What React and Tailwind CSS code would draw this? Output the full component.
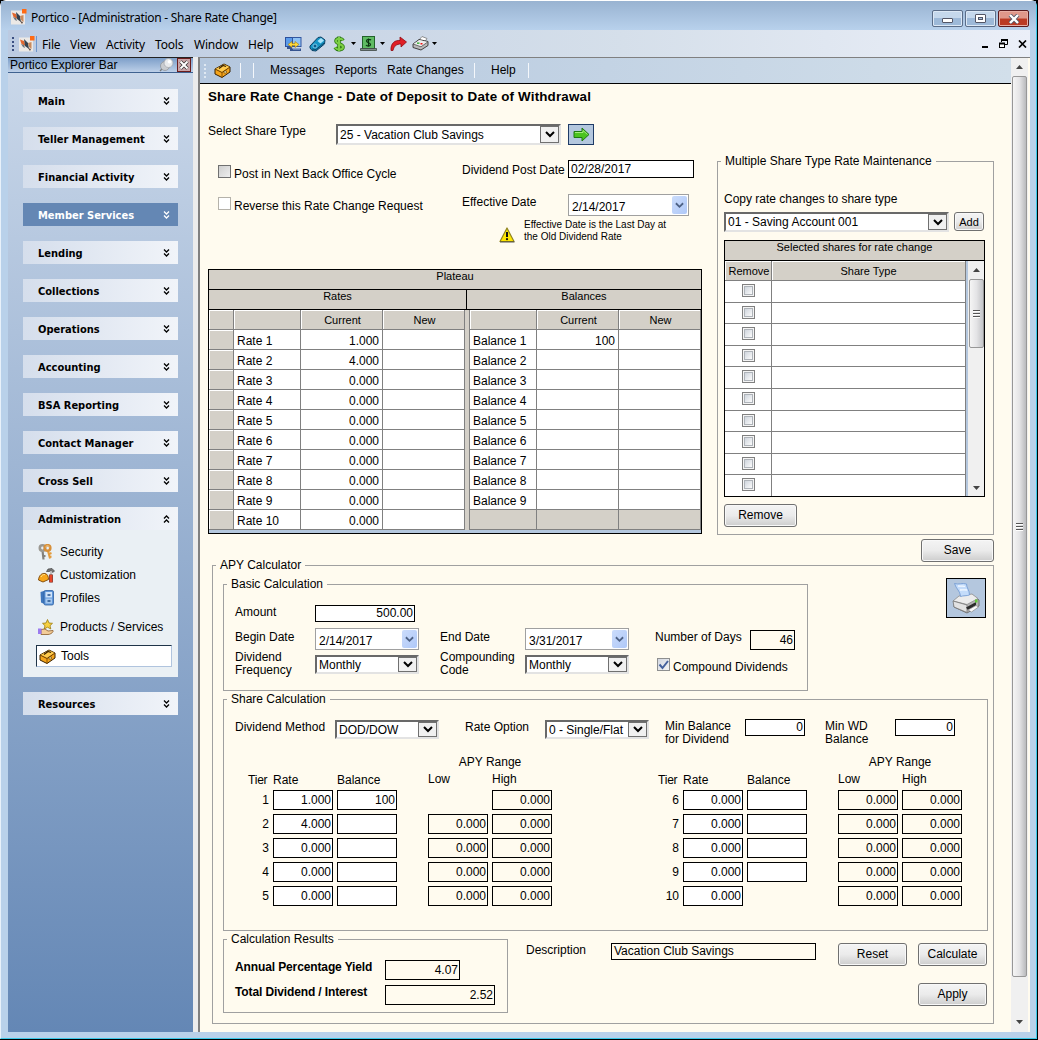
import React from 'react';
import clsx from 'clsx';

const SECTIONS = [
  'Main',
  'Teller Management',
  'Financial Activity',
  'Member Services',
  'Lending',
  'Collections',
  'Operations',
  'Accounting',
  'BSA Reporting',
  'Contact Manager',
  'Cross Sell',
];

const RATES = ['1.000', '4.000', '0.000', '0.000', '0.000', '0.000', '0.000', '0.000', '0.000', '0.000'];

const LEFT_TIERS = [
  { tier: 1, rate: '1.000', balance: '100', high: '0.000' },
  { tier: 2, rate: '4.000', balance: '', low: '0.000', high: '0.000' },
  { tier: 3, rate: '0.000', balance: '', low: '0.000', high: '0.000' },
  { tier: 4, rate: '0.000', balance: '', low: '0.000', high: '0.000' },
  { tier: 5, rate: '0.000', balance: '', low: '0.000', high: '0.000' },
];

const RIGHT_TIERS = [
  { tier: 6, rate: '0.000', balance: '', low: '0.000', high: '0.000' },
  { tier: 7, rate: '0.000', balance: '', low: '0.000', high: '0.000' },
  { tier: 8, rate: '0.000', balance: '', low: '0.000', high: '0.000' },
  { tier: 9, rate: '0.000', balance: '', low: '0.000', high: '0.000' },
  { tier: 10, rate: '0.000', low: '0.000', high: '0.000' },
];

/* ---------- icons ---------- */

function LogoIcon() {
  return (
    <svg width="16" height="16" viewBox="0 0 16 16" className="shrink-0">
      <rect x="0" y="1.500" width="14" height="14" fill="#ece9e6" />
      <path d="M1 3.500l4 1.500 1.500 5L2.500 8z" fill="#e2672e" />
      <path d="M5 3l4 4 1 6-4-3z" fill="#34424f" />
      <path d="M2 8l3 1 1 3-2-1z" fill="#6d7880" />
      <path d="M9 7l3.500-1v7L10 11z" fill="#c98a5c" />
      <path d="M9 12l3 1-1 2z" fill="#5c4a40" />
      <rect x="11" y="0" width="4.500" height="4.500" fill="#ff6a13" />
    </svg>
  );
}

function MonitorsIcon() {
  return (
    <svg width="17" height="16" viewBox="0 0 17 16">
      <rect x="0.500" y="1.500" width="8" height="9" fill="#5b9bea" stroke="#2b4f9c" />
      <rect x="7.500" y="1.500" width="8.500" height="9" fill="#8fc2f5" stroke="#33579f" />
      <path d="M2 11h5v2H2zM5 12.500h11V15H5z" fill="#36548f" />
      <path d="M8 13h7" stroke="#9db8de" />
      <path d="M3 8.500l4-3v2h3v-2l4 3-4 3v-2H7v2z" fill="#ffd93b" stroke="#a07a10" strokeWidth="0.600" />
    </svg>
  );
}

function PagerIcon() {
  return (
    <svg width="17" height="16" viewBox="0 0 17 16">
      <path d="M1 10l8-8.500 3-.5 4 3-.500 4-8.500 7-4-.5-2-2.500z" fill="#1593c4" stroke="#0c3f63" />
      <path d="M8.500 5l3.500-3 3 2.500-3.500 3z" fill="#a7e3fa" />
      <circle cx="6" cy="10" r="2" fill="#0c5a8a" stroke="#8fdcf8" strokeWidth="0.800" />
      <path d="M3 13l4 .5 8-6.500" stroke="#0b4669" fill="none" />
    </svg>
  );
}

function DollarIcon() {
  return (
    <svg width="12" height="16" viewBox="0 0 12 16" fill="none">
      <path d="M10 4.500C9 2 3 2 3 5s7 3 7 6-6 3.500-8 .5M6 0.500v15" stroke="#2d7a14" strokeWidth="3.600" />
      <path d="M10 4.500C9 2 3 2 3 5s7 3 7 6-6 3.500-8 .5M6 1v14" stroke="#7ccf45" strokeWidth="2" />
    </svg>
  );
}

function CashIcon() {
  return (
    <svg width="17" height="16" viewBox="0 0 17 16">
      <rect x="2.500" y="0.500" width="12" height="12" fill="#5fbb63" stroke="#22622a" />
      <path d="M11 4.200C10 3 6.500 3 6.500 5s4 1.500 4 3.500-3.500 2-4.500.5M8.500 2.500v8" stroke="#0b3410" fill="none" strokeWidth="1.200" />
      <path d="M0.500 12.500h16v2H0.500z" fill="#7f8d88" stroke="#3c4643" strokeWidth="0.800" />
    </svg>
  );
}

function ForwardIcon() {
  return (
    <svg width="17" height="16" viewBox="0 0 17 16">
      <path d="M1 14.500C0.500 7 5 4 10 4.500V1l6.500 5L11 11V8C6.500 8 4 10 3 14.500z" fill="#e01f26" stroke="#8f0a10" strokeWidth="0.800" />
    </svg>
  );
}

function SmallPrinterIcon() {
  return (
    <svg width="17" height="15" viewBox="0 0 17 15">
      <path d="M7 4l3-3.500 5 2-2 3z" fill="#fff" stroke="#777" strokeWidth="0.800" />
      <path d="M1 8l6-4.500 9 2v4L9 14l-8-2.500z" fill="#b9b9b9" stroke="#333" strokeWidth="0.900" />
      <path d="M1.500 8L7.500 4l8 2-6.500 4.500z" fill="#ededed" />
      <path d="M1 8l8 2.800 7-5" stroke="#555" fill="none" strokeWidth="0.800" />
      <rect x="8.500" y="7" width="2" height="1.500" fill="#e11" />
      <rect x="5" y="6.500" width="2.500" height="1.300" fill="#2a2" />
    </svg>
  );
}

function ToolboxIcon() {
  return (
    <svg width="17" height="15" viewBox="0 0 17 15">
      <path d="M1 6L10 1l6 3v5l-8 5.500L1 11z" fill="#f5a51c" stroke="#3a2200" />
      <path d="M1.500 6L10 1.500l5.500 2.500L8 9z" fill="#ffcb4d" />
      <path d="M1 6l7 3.500L16 4" stroke="#6b3d00" fill="none" />
      <path d="M5 5.500l4-3 3 1" stroke="#3a2200" fill="none" strokeWidth="1.300" />
      <path d="M8 9.500v5" stroke="#8a5200" />
      <rect x="10" y="8" width="2.500" height="2" fill="#fff2a8" stroke="#5a3500" strokeWidth="0.600" />
    </svg>
  );
}

function PinIcon() {
  return (
    <svg width="15" height="14" viewBox="0 0 15 14">
      <path d="M1 13l4-4" stroke="#777" strokeWidth="1.200" />
      <ellipse cx="6" cy="8" rx="4.500" ry="4.500" fill="#c9ccd0" stroke="#8b8f94" strokeWidth="0.700" />
      <circle cx="9.500" cy="5" r="4.500" fill="#e8eaec" stroke="#9da1a6" strokeWidth="0.700" />
      <circle cx="10.500" cy="3.800" r="1.800" fill="#fff" />
    </svg>
  );
}

function KeysIcon() {
  return (
    <svg width="16" height="16" viewBox="0 0 16 16">
      <path d="M4.500 6.500l1 9M5.500 12h2" stroke="#84817b" strokeWidth="2.200" />
      <circle cx="4.500" cy="4" r="2.700" fill="none" stroke="#9b9891" strokeWidth="2.600" />
      <path d="M10 7l2 7.500M11 10l2.500-1M11.500 13l2-.5" stroke="#e39b3c" strokeWidth="2" />
      <circle cx="9.500" cy="4" r="2.800" fill="none" stroke="#d78f38" strokeWidth="2.600" />
      <path d="M7.500 3c1-1.500 3-1.500 4 0" fill="none" stroke="#f7d39a" />
    </svg>
  );
}

function HardhatIcon() {
  return (
    <svg width="17" height="15" viewBox="0 0 17 15">
      <path d="M0.500 12C1 7 4 5 7 5.500c2.500.5 3.500 3 3.500 6L5 14z" fill="#f7a61a" stroke="#7a4300" strokeWidth="0.900" />
      <path d="M3 9c1-2 2-2.500 4-2.500" stroke="#ffe28a" fill="none" />
      <path d="M8.500 3.500L10 1l4-.5 2.500 2.500-1.500 1.500-2-1.500-2 .5z" fill="#777" stroke="#333" strokeWidth="0.600" />
      <path d="M13 3v4" stroke="#bbb" strokeWidth="1.800" />
      <path d="M13 6.500v8" stroke="#7c1808" strokeWidth="3.600" />
      <path d="M13 7v7" stroke="#e8452a" strokeWidth="2.200" />
    </svg>
  );
}

function ProfilesIcon() {
  return (
    <svg width="15" height="16" viewBox="0 0 15 16">
      <path d="M0.500 2l5-1.500v14L1 12.500z" fill="#3f77bd" />
      <rect x="4" y="0.500" width="9.500" height="14.500" rx="1.500" fill="#5f97db" stroke="#2f5f9f" strokeWidth="0.800" />
      <rect x="5.500" y="2" width="6.500" height="5.500" fill="#cfe3f8" />
      <rect x="5.500" y="8.500" width="6.500" height="5" fill="#a5c8ee" />
      <path d="M7.500 5h3M7.500 11h3" stroke="#24518c" strokeWidth="1.500" />
    </svg>
  );
}

function ServicesIcon() {
  return (
    <svg width="17" height="16" viewBox="0 0 17 16">
      <path d="M9.500 0.500L11 4l3.500.3L12 6.700l.8 3.300-3.300-1.800L6.200 10 7 6.700 4.500 4.300 8 4z" fill="#f6d040" stroke="#9a7a10" strokeWidth="0.800" />
      <path d="M3 10.500l4-.5 3 2 5-.5c1 1-2 4-5 4H3z" fill="#f3cd98" stroke="#8a5a28" strokeWidth="0.800" />
      <rect x="0" y="9.500" width="3.500" height="5.500" fill="#9b7bef" />
    </svg>
  );
}

function WarningIcon() {
  return (
    <svg width="16" height="16" viewBox="0 0 16 16">
      <path d="M8 1L15 14.500H1z" fill="#ffe600" stroke="#8f8320" strokeWidth="1.200" strokeLinejoin="round" />
      <path d="M1 15h14.500" stroke="#444" strokeWidth="0.900" />
      <path d="M8 5v5" stroke="#111" strokeWidth="2" />
      <circle cx="8" cy="12.200" r="1.100" fill="#111" />
    </svg>
  );
}

function GoArrowIcon() {
  return (
    <svg width="17" height="15" viewBox="0 0 17 15">
      <path d="M1 4.500h8V1l7 6.500-7 6.500v-3.500H1z" fill="#4cc41f" stroke="#1f7a12" />
      <path d="M2 5.500h8V3.500L14.500 7.500" fill="none" stroke="#a6ec7d" />
    </svg>
  );
}

function PrinterIcon() {
  return (
    <svg width="30" height="32" viewBox="0 0 30 32">
      <path d="M3 20l8-5 10-2 7 5v6l-12 7-13-6z" fill="#b4b4b4" stroke="#6a6a6a" strokeWidth="0.900" />
      <path d="M2 19l6-5 13-2 6 4.500-11 6z" fill="#ececec" stroke="#8d8d8d" strokeWidth="0.800" />
      <path d="M2 19l14 4v7.500L3 25z" fill="#e2e2e2" stroke="#777" strokeWidth="0.800" />
      <path d="M3.500 1.500c4 1.500 8-1 12 .5 0 4 3 6 3 11-3 1-6 .5-9 1.500C9.500 9 5 7 3.500 1.500z" fill="#c4dcfa" stroke="#6f98d2" strokeWidth="0.800" />
      <path d="M7 4c3 .5 5-.5 7 .5M9 8c3 0 5-.5 7 0" stroke="#f4f9ff" fill="none" strokeWidth="1.300" />
      <path d="M15 25.500l10-5.500v3.500l-8 4.500z" fill="#2b2b2b" />
      <path d="M17 28l8-4.500 2.500 1.500-7 5z" fill="#fafafa" stroke="#888" strokeWidth="0.700" />
      <rect x="24" y="17.500" width="2.500" height="3" fill="#63c93a" />
    </svg>
  );
}

function CaretDown() {
  return (
    <svg width="5" height="3" viewBox="0 0 5 3">
      <path d="M0 0h5L2.500 3z" fill="#000" />
    </svg>
  );
}

function Chevron({ color = '#000', width = 10 }) {
  return (
    <svg width={width} height="7" viewBox="0 0 10 7">
      <path d="M1 1l4 4 4-4" fill="none" stroke={color} strokeWidth="2" />
    </svg>
  );
}

function DoubleChevron({ up, color = '#000' }) {
  return (
    <svg width="7" height="8" viewBox="0 0 7 8" className={clsx(up && 'rotate-180')}>
      <path d="M1 0.500l2.500 2.500L6 0.500M1 4.500L3.500 7 6 4.500" fill="none" stroke={color} strokeWidth="1.300" />
    </svg>
  );
}

/* ---------- form controls ---------- */

function Label({ className, children }) {
  return <span className={clsx('block shrink-0 whitespace-nowrap leading-[15px]', className)}>{children}</span>;
}

function Input({ value, className, readOnly }) {
  return (
    <div
      className={clsx(
        'flex shrink-0 items-center justify-end border border-black px-px',
        readOnly ? 'bg-[#fffbef]' : 'bg-white',
        className
      )}
    >
      {value}
    </div>
  );
}

function Select({ value, className }) {
  return (
    <div
      className={clsx(
        'flex shrink-0 items-center border-2 border-t-[#696969] border-r-[#e3e3e3] border-b-[#e3e3e3] border-l-[#696969] bg-white',
        className
      )}
    >
      <span className="flex-1 whitespace-nowrap pt-px pl-0.5">{value}</span>
      <span className="flex h-full w-[19px] items-center justify-center border border-[#707070] bg-[#f0f0f0]">
        <Chevron />
      </span>
    </div>
  );
}

function DatePicker({ value, className }) {
  return (
    <div className={clsx('flex h-[22px] shrink-0 items-center border border-[#a0a0a0] bg-white pr-px', className)}>
      <span className="flex-1 pt-1 pl-[3px]">{value}</span>
      <span className="flex h-[18px] w-[15px] items-center justify-center rounded-xs bg-linear-to-br from-[#cbdcfb] to-[#afc8f8]">
        <Chevron color="#4d6185" width={9} />
      </span>
    </div>
  );
}

function Button({ className, children }) {
  return (
    <button
      type="button"
      className={clsx(
        'shrink-0 rounded-[3px] border border-[#707070] bg-linear-to-b from-[#f4f4f4] from-0% via-[#ebebeb] via-50% to-[#cdcdcd] text-center shadow-[inset_0_0_0_1px_#f8f8f8]',
        className
      )}
    >
      {children}
    </button>
  );
}

function Group({ title, className, children }) {
  return (
    <fieldset className={clsx('shrink-0 border border-[#a0a0a0]', className)}>
      <legend className="ml-[3px] h-[15px] px-1 leading-[15px] whitespace-nowrap">{title}</legend>
      {children}
    </fieldset>
  );
}

function ScrollArrow({ up }) {
  return (
    <svg width="7" height="4" viewBox="0 0 7 4" className={clsx(up && 'rotate-180')}>
      <path d="M0 0h7L3.500 4z" fill="#444" />
    </svg>
  );
}

function ScrollGrip() {
  return (
    <span className="flex flex-col gap-px">
      <span className="h-[2px] w-[7px] border-t border-[#555] bg-white" />
      <span className="h-[2px] w-[7px] border-t border-[#555] bg-white" />
      <span className="h-[2px] w-[7px] border-t border-[#555] bg-white" />
    </span>
  );
}

/* ---------- window chrome ---------- */

function TitleBar() {
  return (
    <header className="flex h-[29px] shrink-0 items-start bg-linear-to-b from-[#99b3d1] to-[#b8d1ec] pr-[7px] pl-2">
      <span className="mt-2 ml-0.5">
        <LogoIcon />
      </span>
      <h1 className="mt-2 ml-1 flex-1 font-['Noto_Sans'] text-[12px] leading-[18px] tracking-[-0.28px] whitespace-nowrap">
        Portico - [Administration - Share Rate Change]
      </h1>
      <div className="mt-[9px] flex gap-0.5">
        <span className="flex h-[17px] w-[31px] items-center justify-center rounded-xs border border-[#5b6d88] bg-linear-to-b from-[#c5d8ec] from-50% to-[#9db9d8] to-50% shadow-[inset_0_0_0_1px_#dce8f5]">
          <span className="mt-1 h-[5px] w-[11px] rounded-[1px] border border-[#535666] bg-white" />
        </span>
        <span className="flex h-[17px] w-[31px] items-center justify-center rounded-xs border border-[#5b6d88] bg-linear-to-b from-[#c5d8ec] from-50% to-[#9db9d8] to-50% shadow-[inset_0_0_0_1px_#dce8f5]">
          <span className="flex h-[9px] w-[11px] items-center justify-center rounded-[1px] border border-[#535666] bg-white">
            <span className="h-[3px] w-[5px] border border-[#535666] bg-[#a9c3e0]" />
          </span>
        </span>
        <span className="flex h-[17px] w-[31px] items-center justify-center rounded-xs border border-[#5a1a1e] bg-linear-to-b from-[#e0978a] from-45% to-[#bb3a24] to-55% shadow-[inset_0_0_0_1px_#e8aea4]">
          <svg width="12" height="10" viewBox="0 0 12 10">
            <path d="M2 1l8 8M10 1L2 9" stroke="#535666" strokeWidth="4" />
            <path d="M2 1l8 8M10 1L2 9" stroke="#fff" strokeWidth="2.400" />
          </svg>
        </span>
      </div>
    </header>
  );
}

function MenuBar() {
  return (
    <nav className="flex h-[27px] shrink-0 items-center bg-linear-to-r from-[#bccbe2] via-[#d5dfea] via-60% to-[#ebeff8] font-['Noto_Sans'] text-[12px] tracking-[-0.2px]">
      <span className="ml-1 flex w-[3px] flex-col gap-0.5">
        <i className="size-0.5 bg-[#3b4f81]" />
        <i className="size-0.5 bg-[#3b4f81]" />
        <i className="size-0.5 bg-[#3b4f81]" />
        <i className="size-0.5 bg-[#3b4f81]" />
      </span>
      <span className="ml-1 flex w-[18px] justify-between border-r border-[#6f96cc]">
        <LogoIcon />
      </span>
      <span className="ml-[5px] w-[28px] pt-px">File</span>
      <span className="w-[36px] pt-px">View</span>
      <span className="w-[49px] pt-px">Activity</span>
      <span className="w-[39px] pt-px">Tools</span>
      <span className="w-[54px] pt-px">Window</span>
      <span className="w-[37px] pt-px">Help</span>
      <MonitorsIcon />
      <span className="ml-[7px]">
        <PagerIcon />
      </span>
      <span className="ml-[7px]">
        <DollarIcon />
      </span>
      <span className="ml-[6px]">
        <CaretDown />
      </span>
      <span className="ml-1">
        <CashIcon />
      </span>
      <span className="ml-[3px]">
        <CaretDown />
      </span>
      <span className="ml-[5px]">
        <ForwardIcon />
      </span>
      <span className="ml-[5px]">
        <SmallPrinterIcon />
      </span>
      <span className="ml-[3px] flex-1">
        <CaretDown />
      </span>
      <span className="mt-1.5 mr-[11px] h-0.5 w-1.5 bg-black" />
      <svg width="9" height="10" viewBox="0 0 9 10" className="mr-2.5">
        <path d="M2.500 3V0.500h6v5H6" fill="none" stroke="#000" />
        <path d="M2 1h7" stroke="#000" strokeWidth="2" />
        <rect x="0.500" y="4.500" width="5" height="4" fill="#fff" stroke="#000" />
        <path d="M0 4.500h6" stroke="#000" strokeWidth="2" />
      </svg>
      <svg width="9" height="8" viewBox="0 0 9 8" className="mr-[3px]">
        <path d="M1 0.500l7 7M8 0.500l-7 7" stroke="#000" strokeWidth="1.700" />
      </svg>
    </nav>
  );
}

function SectionHeader({ title, active, open }) {
  return (
    <div
      className={clsx(
        "flex h-[23px] items-center justify-between pr-2 pl-[15px] font-['DejaVu_Sans_Condensed','DejaVu_Sans'] text-[11px] font-bold",
        active
          ? 'bg-[#6487b4] text-white'
          : 'bg-linear-to-r from-[#d5deec] to-[#f1f4f9]'
      )}
    >
      <span className="pt-px whitespace-nowrap">{title}</span>
      <DoubleChevron up={open} color={active ? '#fff' : '#000'} />
    </div>
  );
}

function ExplorerBar() {
  return (
    <aside className="flex w-[185px] shrink-0 flex-col">
      <div className="flex h-4 items-center border-y border-t-[#222] border-b-[#3f6290] bg-linear-to-b from-[#7d9fc9] to-[#bdd0e8]">
        <span className="flex-1 pl-0.5">Portico Explorer Bar</span>
        <PinIcon />
        <span className="mr-0.5 ml-[3px] flex size-3.5 items-center justify-center border border-[#6b1c1c] bg-[#c9a4a8]">
          <svg width="10" height="10" viewBox="0 0 10 10">
            <path d="M1.500 1.500l7 7M8.500 1.500l-7 7" stroke="#333" strokeWidth="3.400" />
            <path d="M1.500 1.500l7 7M8.500 1.500l-7 7" stroke="#fff" strokeWidth="2" />
          </svg>
        </span>
      </div>
      <div className="flex flex-1 flex-col gap-[15px] bg-linear-to-b from-[#c9d7e9] to-[#6487b5] px-[15px] pt-4">
        {SECTIONS.map((title) => (
          <SectionHeader key={title} title={title} active={title === 'Member Services'} />
        ))}
        <div className="h-[170px] bg-[#eaf0f4]">
          <SectionHeader title="Administration" open />
          <ul className="pl-[15px]">
            <li className="mt-[13px] flex h-[18px] items-center">
              <span className="w-[22px]">
                <KeysIcon />
              </span>
              Security
            </li>
            <li className="mt-[5px] flex h-[18px] items-center">
              <span className="w-[22px]">
                <HardhatIcon />
              </span>
              Customization
            </li>
            <li className="mt-[5px] flex h-[18px] items-center">
              <span className="w-[22px] pl-0.5">
                <ProfilesIcon />
              </span>
              Profiles
            </li>
            <li className="mt-[11px] flex h-[18px] items-center whitespace-nowrap">
              <span className="w-[22px]">
                <ServicesIcon />
              </span>
              Products / Services
            </li>
            <li className="mt-[9px] -ml-0.5 flex h-[22px] w-[136px] items-center border border-t-[#1f3448] border-r-[#b0c4de] border-b-[#b0c4de] border-l-[#1f3448] bg-white pl-0.5">
              <span className="w-[22px]">
                <ToolboxIcon />
              </span>
              Tools
            </li>
          </ul>
        </div>
        <SectionHeader title="Resources" />
      </div>
    </aside>
  );
}

function ToolBar() {
  return (
    <div className="flex h-[26px] shrink-0 items-center border-b border-black bg-linear-to-r from-[#b4c7de] to-[#d2dfea]">
      <span className="ml-1 flex w-[3px] flex-col gap-0.5">
        <i className="size-0.5 bg-[#dfe8f2]" />
        <i className="size-0.5 bg-[#dfe8f2]" />
        <i className="size-0.5 bg-[#dfe8f2]" />
        <i className="size-0.5 bg-[#dfe8f2]" />
      </span>
      <span className="ml-[7px]">
        <ToolboxIcon />
      </span>
      <span className="ml-[9px] h-[15px] w-px bg-[#f4f7fb]" />
      <span className="ml-3 h-[15px] w-px bg-[#f4f7fb]" />
      <span className="ml-4 w-[65px]">Messages</span>
      <span className="w-[52px]">Reports</span>
      <span className="w-[87px] whitespace-nowrap">Rate Changes</span>
      <span className="h-[15px] w-px bg-[#f4f7fb]" />
      <span className="ml-4 w-[37px]">Help</span>
      <span className="h-[15px] w-px bg-[#f4f7fb]" />
    </div>
  );
}

function PageScrollbar() {
  return (
    <div className="flex w-[17px] shrink-0 flex-col items-center bg-[#f0f0f0]">
      <span className="flex h-[18px] items-center">
        <ScrollArrow up />
      </span>
      <span className="flex h-[901px] w-[15px] items-center justify-center rounded-xs border border-[#979797] bg-linear-to-r from-[#f5f5f5] via-[#e4e4e6] to-[#b9babd]">
        <ScrollGrip />
      </span>
      <span className="mt-auto mb-[7px] flex h-[7px] items-center">
        <ScrollArrow />
      </span>
    </div>
  );
}

/* ---------- share rate form ---------- */

function Cell({ className, head, children }) {
  return (
    <div className={clsx('border-r border-b border-[#808080] whitespace-nowrap', head && 'bg-[#d4d0c8]', className)}>
      {children}
    </div>
  );
}

const HEAD_EDGE = 'shadow-[inset_1px_1px_0_#fff]';
const HEAD_TEXT = 'shadow-[inset_1px_1px_0_#fff] text-center text-[11px] leading-[20px]';

function PlateauTable() {
  return (
    <div className="mt-[26px] h-[265px] border border-black bg-[#b4c7de]">
      <div className="h-5 border-b border-black bg-[#d4d0c8] text-center text-[11px] leading-[13px]">Plateau</div>
      <div className="flex h-5 border-b border-black bg-[#d4d0c8] text-center text-[11px] leading-[13px]">
        <span className="w-[258px] border-r border-black">Rates</span>
        <span className="flex-1">Balances</span>
      </div>
      <div className="grid auto-rows-[20px] grid-cols-[25px_67px_82px_82px_5px_67px_82px_82px] bg-white">
        <Cell head className={HEAD_EDGE} />
        <Cell head className={HEAD_EDGE} />
        <Cell head className={clsx(HEAD_TEXT, 'pl-0.5')}>Current</Cell>
        <Cell head className={clsx(HEAD_TEXT, 'pl-0.5')}>New</Cell>
        <Cell head className="border-b-0" />
        <Cell head className={HEAD_EDGE} />
        <Cell head className={clsx(HEAD_TEXT, 'pl-0.5')}>Current</Cell>
        <Cell head className={clsx(HEAD_TEXT, 'pl-0.5')}>New</Cell>
        {RATES.map((rate, i) => {
          const last = i === RATES.length - 1;
          return (
            <React.Fragment key={i}>
              <Cell head className={HEAD_EDGE} />
              <Cell className="pl-[3px] leading-[22px]">Rate {i + 1}</Cell>
              <Cell className="pr-[3px] text-right leading-[22px]">{rate}</Cell>
              <Cell />
              <Cell head className="border-b-0" />
              <Cell head={last} className="pl-[3px] leading-[22px]">
                {!last && `Balance ${i + 1}`}
              </Cell>
              <Cell head={last} className="pr-[3px] text-right leading-[22px]">
                {i === 0 && '100'}
              </Cell>
              <Cell head={last} />
            </React.Fragment>
          );
        })}
      </div>
    </div>
  );
}

function ShareMaintenance() {
  return (
    <Group title="Multiple Share Type Rate Maintenance" className="mt-[46px] ml-[15px] h-[381px] w-[277px]">
      <div className="pl-1.5">
        <Label className="mt-[23px]">Copy rate changes to share type</Label>
        <div className="mt-[5px] flex">
          <Select value="01 - Saving Account 001" className="h-5 w-[225px]" />
          <Button className="ml-[5px] h-[19px] w-[30px] text-[11px] leading-[16px]">Add</Button>
        </div>
        <div className="mt-2 h-[257px] w-[261px] border border-black bg-white">
          <div className="h-5 border-b border-black bg-[#d4d0c8] text-center text-[11px] leading-[13px]">
            Selected shares for rate change
          </div>
          <div className="flex h-[235px]">
            <div className="w-[241px] overflow-hidden">
              <div className="flex h-5">
                <Cell head className={clsx(HEAD_TEXT, 'w-[47px] pl-0.5')}>
                  Remove
                </Cell>
                <Cell head className={clsx(HEAD_TEXT, 'flex-1')}>
                  Share Type
                </Cell>
              </div>
              {Array.from({ length: 10 }, (_, i) => (
                <div key={i} className="flex h-[21.600px]">
                  <Cell className="flex w-[47px] items-start justify-center pt-[3px]">
                    <span className="flex size-[13px] items-center justify-center border border-[#808080] bg-[#f4f4f4]">
                      <i className="size-[9px] border border-[#aeb3b9] bg-linear-to-br from-[#cfd5dd] to-[#fbfbfb]" />
                    </span>
                  </Cell>
                  <Cell className="flex-1" />
                </div>
              ))}
            </div>
            <div className="flex flex-1 flex-col items-center border-l-2 border-[#b4c7de] bg-[#f0f0f0]">
              <span className="flex h-[18px] items-center">
                <ScrollArrow up />
              </span>
              <span className="flex h-[69px] w-[15px] items-center justify-center rounded-xs border border-[#979797] bg-linear-to-r from-[#f5f5f5] via-[#e4e4e6] to-[#c4c5c8]">
                <ScrollGrip />
              </span>
              <span className="mt-auto mb-[6px]">
                <ScrollArrow />
              </span>
            </div>
          </div>
        </div>
        <Button className="mt-[7px] h-[23px] w-[73px]">Remove</Button>
      </div>
    </Group>
  );
}

function ShareForm() {
  return (
    <div className="w-[494px]">
      <div className="mt-4 flex h-[21px] items-start">
        <Label className="w-[128px]">Select Share Type</Label>
        <Select value="25 - Vacation Club Savings" className="h-[21px] w-[225px]" />
        <span className="ml-[7px] flex h-[21px] w-[26px] items-center justify-center border border-[#1f3b66] bg-[#b4c7de]">
          <GoArrowIcon />
        </span>
      </div>
      <div className="mt-[15px] flex h-[18px] items-start pl-2.5">
        <span className="mt-[5px] size-[13px] border border-[#707070] bg-linear-to-br from-[#cfcfcf] to-[#eee]" />
        <Label className="mt-[7px] ml-[3px] w-[228px]">Post in Next Back Office Cycle</Label>
        <Label className="mt-[3px] w-[106px]">Dividend Post Date</Label>
        <Input value="02/28/2017" className="h-[18px] w-[126px] justify-start! pl-0.5" />
      </div>
      <div className="mt-4 flex h-[22px] items-start pl-2.5">
        <span className="mt-[3px] size-[13px] border border-[#b5b2aa] bg-white" />
        <Label className="mt-[5px] ml-[3px] w-[228px]">Reverse this Rate Change Request</Label>
        <Label className="mt-px w-[106px]">Effective Date</Label>
        <DatePicker value="2/14/2017" className="w-[121px]" />
      </div>
      <div className="mt-[3px] flex h-6 items-start pl-[291px]">
        <span className="mt-[8px] w-[25px]">
          <WarningIcon />
        </span>
        <p className="text-[10px] leading-[12px] whitespace-nowrap">
          Effective Date is the Last Day at
          <br />
          the Old Dividend Rate
        </p>
      </div>
      <PlateauTable />
    </div>
  );
}

function TierTable({ tiers, className }) {
  return (
    <div className={clsx('w-[304px]', className)}>
      <Label className="ml-[180px] w-[124px] text-center">APY Range</Label>
      <div className="mt-[3px] mb-[2px] flex h-[15px]">
        <Label className="w-[25px] tracking-[-0.2px]">Tier</Label>
        <Label className="w-16">Rate</Label>
        <Label className="w-[91px]">Balance</Label>
        <Label className="-mt-px w-16">Low</Label>
        <Label className="-mt-px">High</Label>
      </div>
      <div className="flex flex-col gap-1">
        {tiers.map((row) => (
          <div key={row.tier} className="flex h-5 items-center">
            <span className="mr-1 w-[21px] text-right">{row.tier}</span>
            <Input value={row.rate} className="h-5 w-[60px]" />
            <Input value={row.balance} className={clsx('ml-1 h-5 w-[60px]', row.balance === undefined && 'invisible')} />
            <Input readOnly value={row.low} className={clsx('ml-[31px] h-5 w-[60px]', !row.low && 'invisible')} />
            <Input readOnly value={row.high} className="ml-1 h-5 w-[60px]" />
          </div>
        ))}
      </div>
    </div>
  );
}

function BasicCalculation() {
  return (
    <Group title="Basic Calculation" className="mt-1 h-[114px] w-[585px]">
      <div className="pl-[11px]">
        <div className="mt-[13px] flex h-[17px]">
          <Label className="w-20">Amount</Label>
          <Input value="500.00" className="h-[17px] w-[100px]" />
        </div>
        <div className="mt-1.5 flex h-[22px] items-start">
          <Label className="mt-0.5 w-20">Begin Date</Label>
          <DatePicker value="2/14/2017" className="w-[104px]" />
          <Label className="mt-0.5 ml-[21px] w-[85px]">End Date</Label>
          <DatePicker value="3/31/2017" className="w-[104px]" />
          <Label className="mt-0.5 ml-[26px] w-[95px]">Number of Days</Label>
          <Input readOnly value="46" className="mt-0.5 h-5 w-[45px]" />
        </div>
        <div className="mt-px flex h-[26px] items-start">
          <p className="w-20 leading-[13px]">Dividend Frequency</p>
          <Select value="Monthly" className="mt-1 h-[19px] w-[104px]" />
          <p className="ml-[21px] w-[85px] leading-[13px]">Compounding Code</p>
          <Select value="Monthly" className="mt-1 h-[19px] w-[104px]" />
          <span className="mt-[7px] ml-7 flex size-[13px] items-center justify-center border border-[#8e8f8f] bg-linear-to-br from-[#d3d8e2] to-[#f4f4f4]">
            <svg width="11" height="10" viewBox="0 0 11 10">
              <path d="M1.500 4.500l3 3.500L10 1" fill="none" stroke="#44619d" strokeWidth="2" />
            </svg>
          </span>
          <Label className="mt-[9px] ml-[3px]">Compound Dividends</Label>
        </div>
      </div>
    </Group>
  );
}

function ShareCalculation() {
  return (
    <Group title="Share Calculation" className="mt-px h-[239px] w-[765px]">
      <div className="mt-3 flex h-7 items-start pl-[11px]">
        <Label className="mt-px w-[100px]">Dividend Method</Label>
        <Select value="DOD/DOW" className="mt-px h-[19px] w-[104px]" />
        <Label className="mt-px ml-[26px] w-20">Rate Option</Label>
        <Select value="0 - Single/Flat" className="mt-px h-[19px] w-[104px]" />
        <p className="ml-4 w-20 pt-px leading-[13px] whitespace-nowrap">
          Min Balance
          <br />
          for Dividend
        </p>
        <Input value="0" className="h-[17px] w-[60px]" />
        <p className="ml-5 w-[70px] pt-px leading-[13px]">
          Min WD
          <br />
          Balance
        </p>
        <Input value="0" className="h-[17px] w-[60px]" />
      </div>
      <div className="mt-2 flex pl-6">
        <TierTable tiers={LEFT_TIERS} />
        <TierTable tiers={RIGHT_TIERS} className="ml-[106px]" />
      </div>
    </Group>
  );
}

function ResultsRow() {
  return (
    <div className="flex items-start">
      <Group title="Calculation Results" className="mt-px h-[81px] w-[285px]">
        <div className="mt-[13px] flex h-5 pl-[11px]">
          <Label className="w-[150px] font-bold tracking-[-0.12px]">Annual Percentage Yield</Label>
          <Input readOnly value="4.07" className="h-5 w-[75px]" />
        </div>
        <div className="mt-[5px] flex h-5 pl-[11px]">
          <Label className="w-[150px] font-bold tracking-[-0.12px]">Total Dividend / Interest</Label>
          <Input readOnly value="2.52" className="h-5 w-[110px]" />
        </div>
      </Group>
      <Label className="mt-3 ml-[18px] w-[85px]">Description</Label>
      <Input readOnly value="Vacation Club Savings" className="mt-3 h-[17px] w-[205px] justify-start! pl-0.5" />
      <div className="mt-3 ml-[22px] flex w-[149px] flex-wrap justify-end gap-x-[11px] gap-y-[17px]">
        <Button className="h-[23px] w-[69px]">Reset</Button>
        <Button className="h-[23px] w-[69px]">Calculate</Button>
        <Button className="h-[23px] w-[69px]">Apply</Button>
      </div>
    </div>
  );
}

export default function App() {
  return (
    <div className="h-[1040px] w-[1038px] overflow-hidden bg-black font-['Liberation_Sans',Arial,sans-serif] text-[12px] leading-[15px] text-black">
      <div className="flex h-[1039px] w-[1037px] flex-col rounded-t-md border border-t-white border-r-[#3cc8e8] border-b-[#3cc8e8] border-l-[#e8f1fa] bg-[#b9d1ea]">
        <TitleBar />
        <div className="mr-1.5 ml-[7px] flex h-[1002px] flex-col">
          <MenuBar />
          <div className="flex min-h-0 flex-1 bg-[#ececec]">
            <ExplorerBar />
            <main className="ml-[5px] flex flex-1 flex-col border-t border-l-2 border-[#808080] bg-[#fffbef]">
              <div className="flex min-h-0 flex-1">
                <div className="flex w-[811px] flex-col">
                  <ToolBar />
                  <div className="pl-2">
                    <h2 className="h-6 pt-1 text-[13.400px] leading-[17px] font-bold tracking-[0.17px]">
                      Share Rate Change - Date of Deposit to Date of Withdrawal
                    </h2>
                    <div className="flex items-start">
                      <ShareForm />
                      <ShareMaintenance />
                    </div>
                    <div className="mt-1 flex justify-end pr-[17px]">
                      <Button className="h-[23px] w-[73px]">Save</Button>
                    </div>
                    <Group title="APY Calculator" className="-mt-1 ml-1 h-[466px] w-[782px]">
                      <div className="pl-2.5">
                        <div className="flex items-start">
                          <BasicCalculation />
                          <span className="mt-[5px] ml-[138px] flex size-10 items-center justify-center border border-black bg-[#b4c7de]">
                            <PrinterIcon />
                          </span>
                        </div>
                        <ShareCalculation />
                        <ResultsRow />
                      </div>
                    </Group>
                  </div>
                </div>
                <PageScrollbar />
              </div>
            </main>
          </div>
        </div>
      </div>
    </div>
  );
}
